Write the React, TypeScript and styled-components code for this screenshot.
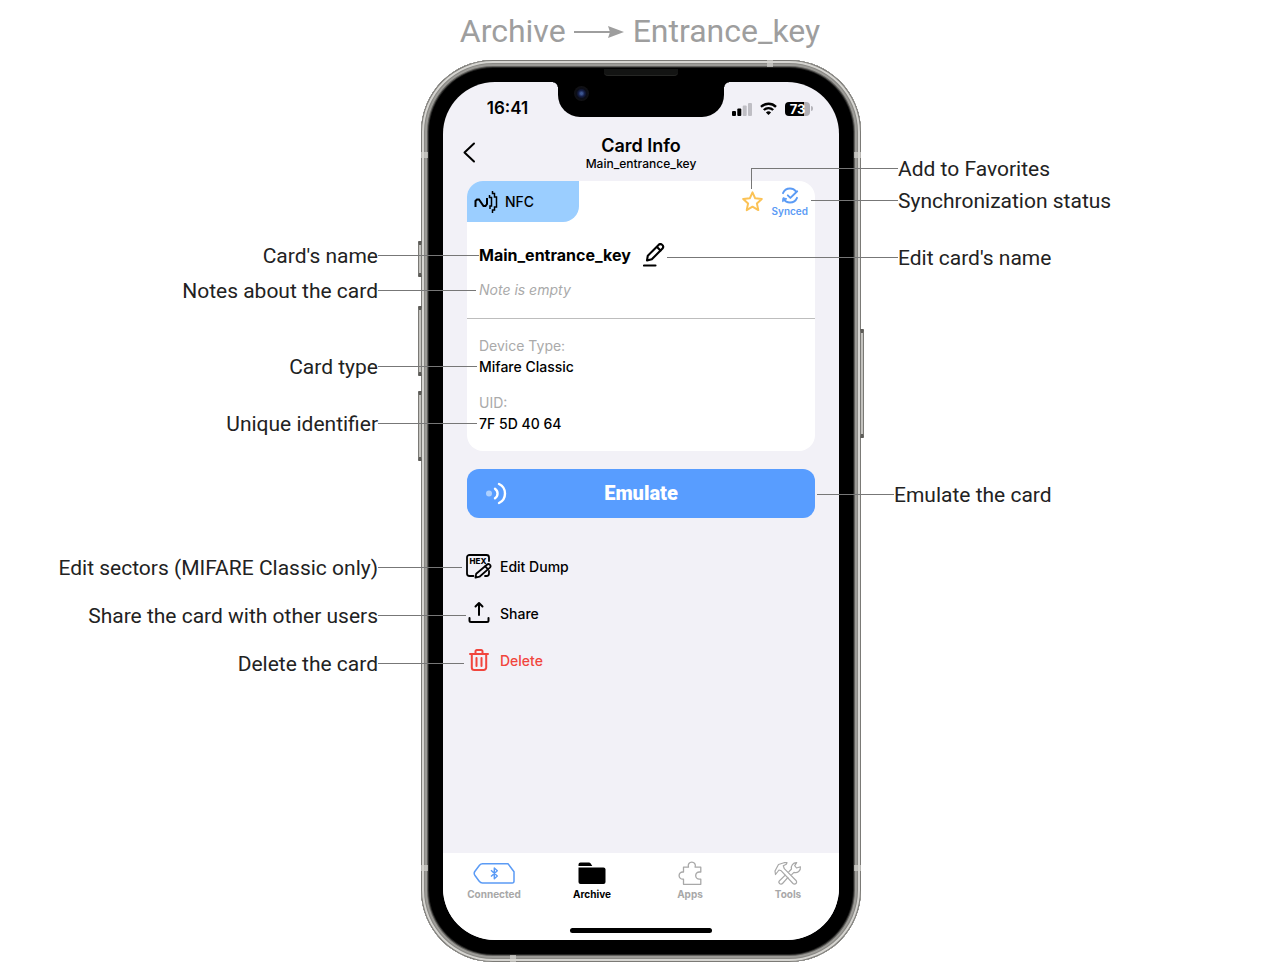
import React from 'react';
import styled, { createGlobalStyle } from 'styled-components';

const GlobalStyle = createGlobalStyle`
  * { box-sizing: border-box; }
  body { margin: 0; background: #fff; }
  button { font: inherit; color: inherit; background: none; border: 0; padding: 0; cursor: pointer; }
  h1, h2, p, ul, dl, dd { margin: 0; padding: 0; }
  ul { list-style: none; }
  a { color: inherit; text-decoration: none; }
  svg { display: block; flex: none; }
`;

const UI_FONT = "Inter, 'Liberation Sans', sans-serif";
const LABEL_FONT = "Roboto, 'Liberation Sans', sans-serif";

const Page = styled.main`
  padding: 0 0 8px 2px;
  font-family: ${LABEL_FONT};
`;

const Breadcrumb = styled.h1`
  display: flex;
  align-items: center;
  justify-content: center;
  gap: 8px;
  height: 60px;
  padding: 2px 2px 0 0;
  font-size: 32px;
  line-height: 40px;
  font-weight: 400;
  color: #9e9e9e;
`;

const Diagram = styled.div`
  display: grid;
  grid-template-columns: 1fr 440px 1fr;
`;

const Callouts = styled.ul<{ $side: 'left' | 'right' }>`
  display: flex;
  flex-direction: column;
  align-items: ${(p) => (p.$side === 'left' ? 'flex-end' : 'flex-start')};
  padding-top: ${(p) => (p.$side === 'left' ? 184 : 97)}px;
  padding-right: ${(p) => (p.$side === 'left' ? 43 : 0)}px;
  z-index: 1;
`;

const Callout = styled.li<{ $gap?: number; $indent?: number }>`
  position: relative;
  margin-top: ${(p) => p.$gap ?? 0}px;
  margin-left: ${(p) => p.$indent ?? 0}px;
  font-size: 21px;
  line-height: 24px;
  white-space: nowrap;
  color: #222;
`;

const Leader = styled.span<{ $side: 'left' | 'right'; $length: number; $drop?: number }>`
  position: absolute;
  top: 11px;
  ${(p) => (p.$side === 'left' ? 'left' : 'right')}: 100%;
  width: ${(p) => p.$length}px;
  height: ${(p) => p.$drop ?? 1}px;
  border-top: 1px solid #777;
  border-left: ${(p) => (p.$drop ? '1px solid #777' : '0')};
  pointer-events: none;
`;

const Phone = styled.section`
  position: relative;
  padding: 22px;
  border-radius: 72px;
  background: #000;
  box-shadow:
    inset 0 0 0 1px #7b7a76,
    inset 0 0 0 3px #d6d5d1,
    inset 0 0 0 4px #8a8985,
    inset 0 0 0 6px #9c9b97,
    inset 0 0 0 7px #62615e,
    inset 0 0 0 8px #222221;
`;

const SideKey = styled.span<{ $side: 'left' | 'right'; $top: number; $height: number }>`
  position: absolute;
  ${(p) => p.$side}: -3px;
  top: ${(p) => p.$top}px;
  width: 4px;
  height: ${(p) => p.$height}px;
  border: 1px solid #7a7975;
  border-top: 4px solid #5d5c58;
  border-bottom: 4px solid #5d5c58;
  border-radius: 1px;
  background: #c4c3bf;
`;

const Antenna = styled.span<{ $vertical?: boolean; $x: string; $y: string }>`
  position: absolute;
  ${(p) => p.$x};
  ${(p) => p.$y};
  width: ${(p) => (p.$vertical ? 6 : 7)}px;
  height: ${(p) => (p.$vertical ? 7 : 6)}px;
  background: #d4d3cf;
  opacity: 0.7;
`;

const Speaker = styled.span`
  position: absolute;
  top: 9px;
  left: 183px;
  right: 183px;
  height: 7px;
  border-radius: 0 0 4px 4px;
  background: #131413;
  border-bottom: 1px solid #262725;
`;

const Screen = styled.div`
  display: flex;
  flex-direction: column;
  min-height: 858px;
  overflow: hidden;
  border-radius: 52px;
  background: #f2f1f7;
  color: #000;
  font-family: ${UI_FONT};
`;

const StatusBar = styled.div`
  display: grid;
  grid-template-columns: 1fr 166px 1fr;
`;

const Clock = styled.time`
  padding: 17px 0 0 14px;
  text-align: center;
  font-size: 17px;
  line-height: 18px;
  font-weight: 600;
`;

const Notch = styled.div`
  position: relative;
  height: 35px;
  border-radius: 0 0 22px 22px;
  background: #000;
  &::before,
  &::after {
    content: '';
    position: absolute;
    top: 0;
    width: 5px;
    height: 5px;
  }
  &::before {
    right: 100%;
    background: radial-gradient(circle at 0 100%, transparent 4px, #000 5px);
  }
  &::after {
    left: 100%;
    background: radial-gradient(circle at 100% 100%, transparent 4px, #000 5px);
  }
`;

const Camera = styled.span`
  position: absolute;
  left: 16px;
  top: 4px;
  width: 15px;
  height: 15px;
  border-radius: 50%;
  background: radial-gradient(circle, #3c5590 0 1px, #16204a 3px, #0b0d18 5px, #111114 7px);
`;

const StatusIcons = styled.div`
  display: flex;
  align-items: center;
  gap: 8px;
  padding: 18px 0 0 8px;
  height: 35px;
`;

const Battery = styled.span`
  display: flex;
  align-items: center;
  gap: 1px;
  &::after {
    content: '';
    width: 2px;
    height: 5px;
    border-radius: 0 2px 2px 0;
    background: #b5b4ba;
  }
`;

const BatteryLevel = styled.span`
  width: 25px;
  border-radius: 4px;
  text-align: center;
  font-size: 13px;
  line-height: 14px;
  font-weight: 700;
  color: #fff;
  background: linear-gradient(90deg, #000 76%, #b0afb5 76%);
`;

const Header = styled.header`
  display: grid;
  grid-template-columns: 1fr auto 1fr;
  align-items: center;
  height: 64px;
  padding: 7px 20px 0;
  text-align: center;
`;

const BackButton = styled.button`
  justify-self: start;
`;

const ScreenTitle = styled.h2`
  font-size: 18px;
  line-height: 22px;
  font-weight: 600;
`;

const ScreenSubtitle = styled.p`
  font-size: 12px;
  line-height: 14px;
  font-weight: 500;
`;

const Card = styled.article`
  margin: 0 24px;
  padding-bottom: 17px;
  border-radius: 16px;
  overflow: hidden;
  background: #fff;
`;

const CardTop = styled.div`
  display: flex;
  justify-content: space-between;
  height: 41px;
`;

const TypeTab = styled.div`
  display: flex;
  align-items: center;
  gap: 7px;
  width: 112px;
  padding-left: 7px;
  border-radius: 0 0 16px 0;
  background: #9bceff;
  font-size: 14px;
  font-weight: 500;
`;

const CardTools = styled.div`
  display: flex;
  align-items: flex-start;
  gap: 9px;
  padding: 6px 7px 0 0;
`;

const FavoriteButton = styled.button`
  padding-top: 4px;
`;

const SyncStatus = styled.div`
  display: flex;
  flex-direction: column;
  align-items: center;
  gap: 1px;
  color: #5b9bf5;
  font-size: 10px;
  line-height: 12px;
  font-weight: 600;
`;

const NameRow = styled.div`
  display: flex;
  align-items: center;
  gap: 12px;
  margin: 21px 12px 0;
  font-size: 16px;
  line-height: 24px;
  font-weight: 700;
`;

const Note = styled.p`
  padding: 13px 12px 18px;
  border-bottom: 1px solid #bdbdbd;
  font-size: 14px;
  line-height: 20px;
  font-style: italic;
  color: #aaa;
`;

const Details = styled.dl`
  display: grid;
  gap: 15px;
  padding: 16px 12px 0;
  font-size: 14px;
  line-height: 21px;
  dt { color: #aaa; }
  dd { font-weight: 500; }
`;

const EmulateButton = styled.button`
  display: grid;
  grid-template-columns: 1fr auto 1fr;
  align-items: center;
  height: 49px;
  margin: 18px 24px 0;
  padding: 0 18px 2px;
  border-radius: 12px;
  background: #589dff;
  color: #fff;
  font-family: ${LABEL_FONT};
  font-size: 20px;
  font-weight: 900;
`;

const Actions = styled.ul`
  display: grid;
  gap: 19px;
  margin: 34px 23px 0;
`;

const ActionButton = styled.button<{ $danger?: boolean }>`
  display: flex;
  align-items: center;
  gap: 8px;
  height: 28px;
  font-size: 14px;
  font-weight: 500;
  color: ${(p) => (p.$danger ? '#f1453d' : '#000')};
`;

const TabBar = styled.nav`
  margin-top: auto;
  height: 87px;
  padding: 7px 2px 0;
  background: #fff;
`;

const Tabs = styled.ul`
  display: grid;
  grid-template-columns: repeat(4, 1fr);
`;

const TabLink = styled.a<{ $active?: boolean }>`
  display: flex;
  flex-direction: column;
  align-items: center;
  gap: 2px;
  font-size: 10px;
  line-height: 12px;
  font-weight: 700;
  color: ${(p) => (p.$active ? '#000' : '#a8a8a8')};
`;

const HomeIndicator = styled.div`
  width: 142px;
  height: 5px;
  margin: 28px auto 0;
  border-radius: 3px;
  background: #000;
`;

const ArrowIcon = () => (
  <svg width="51" height="14" viewBox="0 0 51 14" aria-hidden="true">
    <path d="M0 8h39" stroke="#9e9e9e" strokeWidth="2" />
    <path d="M34 2l16 6-16 6 2-6z" fill="#9e9e9e" />
  </svg>
);

const SignalIcon = () => (
  <svg width="20" height="14" viewBox="0 0 20 14" aria-hidden="true">
    <rect x="0" y="9" width="4" height="5" rx="1" />
    <rect x="5.3" y="6.5" width="4" height="7.5" rx="1" />
    <rect x="10.7" y="3.5" width="4" height="10.5" rx="1" fill="#bfbec4" />
    <rect x="16" y="1" width="4" height="13" rx="1" fill="#bfbec4" />
  </svg>
);

const WifiIcon = () => (
  <svg width="17" height="13" viewBox="0 0 17 13" fill="none" stroke="#000" strokeWidth="2.4" aria-hidden="true">
    <path d="M1 4.8a10.8 10.8 0 0 1 15 0" />
    <path d="M3.8 8a6.8 6.8 0 0 1 9.4 0" />
    <path d="M8.5 13L5.9 10.400a3.8 3.8 0 0 1 5.200 0z" fill="#000" stroke="none" />
  </svg>
);

const BackIcon = () => (
  <svg width="13" height="21" viewBox="0 0 13 21" fill="none" stroke="#000" strokeWidth="2" strokeLinecap="round" strokeLinejoin="round" aria-hidden="true">
    <path d="M11 1.5L1.5 10.5 11 19.5" />
  </svg>
);

const NfcIcon = () => (
  <svg width="24" height="24" viewBox="0 0 24 24" fill="none" stroke="#000" aria-hidden="true">
    <path d="M2.5 16H1.500V11L3 9.500h2l4.500 6.500h2l1.500-2V8" strokeWidth="2" />
    <path d="M15.500 5v2.500h2v8.500h-1.500v3" strokeWidth="1.500" />
    <path d="M18.500 1v2.500h2v3.500h2v10h-2v3h-2V23" strokeWidth="1.500" />
  </svg>
);

const StarIcon = () => (
  <svg width="21" height="21" viewBox="0 0 21 21" fill="none" stroke="#fbc255" strokeWidth="2" strokeLinejoin="round" aria-hidden="true">
    <path d="M10.500 1.300l2.700 6 6.600.7-4.900 4.400 1.400 6.700-5.800-3.400-5.800 3.400 1.400-6.700L1.200 8l6.600-.7z" />
  </svg>
);

const SyncIcon = () => (
  <svg width="18" height="17" viewBox="0 0 18 17" fill="none" stroke="#5b9bf5" strokeWidth="1.9" strokeLinecap="round" strokeLinejoin="round" aria-hidden="true">
    <path d="M2 6.200C3.300 3 6 1.500 9 1.500c2.500 0 4.500 1 5.700 2.600" />
    <path d="M16 10.800c-1.300 3.200-4 4.700-7 4.700-2.800 0-5-1.200-6.300-3.500" />
    <path d="M1.600 14.300l.4-3.600 3.500 1z" fill="#5b9bf5" strokeWidth="1" />
    <path d="M6.800 8.300l2.600 2.600 6.800-6.600" />
  </svg>
);

const PencilIcon = () => (
  <svg width="22" height="24" viewBox="0 0 22 24" fill="none" stroke="#000" strokeWidth="2.1" strokeLinecap="round" strokeLinejoin="round" aria-hidden="true">
    <path d="M4 17.500l.8-4.800L15.300 2.200a2.600 2.600 0 0 1 4.200 3.300L8.800 16.300z" />
    <path d="M14 4l3.500 3.500" />
    <path d="M1 22.500h11.500" />
  </svg>
);

const EmulateIcon = () => (
  <svg width="24" height="24" viewBox="0 0 24 24" fill="none" stroke="#fff" strokeWidth="2.400" strokeLinecap="round" aria-hidden="true">
    <circle cx="4" cy="12.500" r="3" fill="#add0ff" stroke="none" />
    <path d="M10 7.700c3.400 2.400 3.400 7.200 0 9.600" />
    <path d="M14 3c8 3.800 8 15.200 0 19" />
  </svg>
);

const HexIcon = () => (
  <svg width="26" height="26" viewBox="0 0 26 26" fill="none" stroke="#000" strokeWidth="1.800" strokeLinecap="round" strokeLinejoin="round" aria-hidden="true">
    <path d="M7.500 23H3.500A2.500 2.500 0 0 1 1 20.500v-16A2.500 2.500 0 0 1 3.500 2h17A2.500 2.500 0 0 1 23 4.500V8M23 18v2.500a2.500 2.500 0 0 1-2.500 2.500h-1.500" />
    <path d="M9.500 24.700l.7-4 10.700-8.900a2 2 0 0 1 3 2.800l-10.400 9.100z" />
    <path d="M19.200 13.300l2.900 3" />
    <text x="12" y="10.500" textAnchor="middle" fontFamily="Inter, sans-serif" fontSize="8" fontWeight="800" fill="#000" stroke="none">HEX</text>
  </svg>
);

const ShareIcon = () => (
  <svg width="26" height="24" viewBox="0 0 26 24" fill="none" stroke="#000" strokeWidth="2" strokeLinecap="round" strokeLinejoin="round" aria-hidden="true">
    <path d="M13 14V2.500M9.500 5.500L13 2l3.500 3.500" />
    <path d="M3.500 17v2.500a1.500 1.500 0 0 0 1.500 1.500h16a1.500 1.500 0 0 0 1.500-1.500v-2.500" />
  </svg>
);

const TrashIcon = () => (
  <svg width="26" height="24" viewBox="0 0 26 24" fill="none" stroke="#f1453d" strokeWidth="2" strokeLinecap="round" strokeLinejoin="round" aria-hidden="true">
    <path d="M4 6h18M9.500 5.500V3.300A1.300 1.300 0 0 1 10.800 2h4.400a1.300 1.300 0 0 1 1.300 1.300v2.200" />
    <path d="M5.800 6.500v13A2.500 2.500 0 0 0 8.300 22h9.400a2.500 2.500 0 0 0 2.500-2.500v-13" />
    <path d="M10.500 10v8M15.500 10v8" />
  </svg>
);

const ConnectedIcon = () => (
  <svg width="44" height="26" viewBox="-1 0 44 26" fill="none" stroke="#5b9bf5" strokeWidth="1.500" strokeLinejoin="round" aria-hidden="true">
    <path d="M9.500 3.700h25.500l6 8v9.500a1.700 1.700 0 0 1-1.700 1.800H9.500Q7.500 23 6 21L1.800 15.200q-1.200-1.900 0-3.700L6.500 5.200Q7.700 3.700 9.500 3.700z" />
    <path d="M18 10.300l6.300 5.700-3 2.700V8l3 2.700-6.300 5.700" strokeWidth="1.400" />
  </svg>
);

const ArchiveIcon = () => (
  <svg width="28" height="26" viewBox="0 0 28 26" aria-hidden="true">
    <path d="M.5 6V4.500A2 2 0 0 1 2.500 2.500h8.500a2 2 0 0 1 1.500.7L14.300 6z" />
    <path d="M.5 7.500h25a2 2 0 0 1 2 2V22a2 2 0 0 1-2 2h-23a2 2 0 0 1-2-2z" />
  </svg>
);

const AppsIcon = () => (
  <svg width="24" height="26" viewBox="0 0 24 26" fill="none" stroke="#a8a8a8" strokeWidth="1.300" strokeLinejoin="round" aria-hidden="true">
    <path d="M5.500 7.200h5C9.500 4 11.500 2.200 13.800 2.200s4.300 1.800 3.300 5h5.700V12h-1.500a3.600 3.600 0 0 0 0 7.200h1.500v5.100H5.500v-5.100h-.8a3.600 3.600 0 0 1 0-7.200h.8z" />
  </svg>
);

const ToolsIcon = () => (
  <svg width="28" height="26" viewBox="0 0 28 26" fill="none" stroke="#a8a8a8" strokeWidth="1.200" strokeLinejoin="round" aria-hidden="true">
    <path d="M1.500 14.500l-.5-3.500 3.500-6.500 5.500-1.800h3l-.7 1.500-3 1.500 1 3L22 20.500a2 2 0 0 1-3 3L7.300 10.800 5 10z" />
    <path d="M14.500 12.200l3-3.200c-.8-3 1.500-6.500 5.200-6.300l-2 3 1.800 2.300 3.900-1.200c.6 4-3 6.500-6.400 5.500l-2.600 2.600M14.200 17.200l-5.700 6.300a2 2 0 0 1-3-2.800l6-5.800" />
  </svg>
);

const leftCallouts = [
  { text: "Card's name", gap: 0, length: 101 },
  { text: 'Notes about the card', gap: 11, length: 98 },
  { text: 'Card type', gap: 52, length: 99 },
  { text: 'Unique identifier', gap: 33, length: 99 },
  { text: 'Edit sectors (MIFARE Classic only)', gap: 120, length: 84 },
  { text: 'Share the card with other users', gap: 24, length: 88 },
  { text: 'Delete the card', gap: 24, length: 86 },
];

const rightCallouts = [
  { text: 'Add to Favorites', gap: 0, length: 147, indent: 37, drop: 21 },
  { text: 'Synchronization status', gap: 8, length: 87, indent: 37 },
  { text: "Edit card's name", gap: 33, length: 231, indent: 37 },
  { text: 'Emulate the card', gap: 213, length: 77, indent: 33 },
];

const actions = [
  { label: 'Edit Dump', Icon: HexIcon },
  { label: 'Share', Icon: ShareIcon },
  { label: 'Delete', Icon: TrashIcon, danger: true },
];

const tabs = [
  { label: 'Connected', Icon: ConnectedIcon },
  { label: 'Archive', Icon: ArchiveIcon, active: true },
  { label: 'Apps', Icon: AppsIcon },
  { label: 'Tools', Icon: ToolsIcon },
];

export default function App() {
  return (
    <Page>
      <GlobalStyle />
      <Breadcrumb>
        <span>Archive</span>
        <ArrowIcon />
        <span>Entrance_key</span>
      </Breadcrumb>
      <Diagram>
        <Callouts $side="left">
          {leftCallouts.map((c) => (
            <Callout key={c.text} $gap={c.gap}>
              {c.text}
              <Leader $side="left" $length={c.length} />
            </Callout>
          ))}
        </Callouts>

        <Phone aria-label="Card info screen">
          <SideKey $side="left" $top={181} $height={36} />
          <SideKey $side="left" $top={246} $height={70} />
          <SideKey $side="left" $top={331} $height={70} />
          <SideKey $side="right" $top={269} $height={109} />
          <Antenna $x="left: 0" $y="top: 92px" />
          <Antenna $x="right: 0" $y="top: 92px" />
          <Antenna $x="left: 0" $y="bottom: 91px" />
          <Antenna $x="right: 0" $y="bottom: 91px" />
          <Antenna $vertical $x="right: 88px" $y="top: 0" />
          <Antenna $vertical $x="left: 89px" $y="bottom: 0" />
          <Speaker />
          <Screen>
            <StatusBar>
              <Clock>16:41</Clock>
              <Notch>
                <Camera />
              </Notch>
              <StatusIcons>
                <SignalIcon />
                <WifiIcon />
                <Battery>
                  <BatteryLevel>73</BatteryLevel>
                </Battery>
              </StatusIcons>
            </StatusBar>

            <Header>
              <BackButton type="button" aria-label="Back">
                <BackIcon />
              </BackButton>
              <div>
                <ScreenTitle>Card Info</ScreenTitle>
                <ScreenSubtitle>Main_entrance_key</ScreenSubtitle>
              </div>
            </Header>

            <Card>
              <CardTop>
                <TypeTab>
                  <NfcIcon />
                  NFC
                </TypeTab>
                <CardTools>
                  <FavoriteButton type="button" aria-label="Add to favorites">
                    <StarIcon />
                  </FavoriteButton>
                  <SyncStatus>
                    <SyncIcon />
                    Synced
                  </SyncStatus>
                </CardTools>
              </CardTop>
              <NameRow>
                Main_entrance_key
                <button type="button" aria-label="Edit name">
                  <PencilIcon />
                </button>
              </NameRow>
              <Note>Note is empty</Note>
              <Details>
                <div>
                  <dt>Device Type:</dt>
                  <dd>Mifare Classic</dd>
                </div>
                <div>
                  <dt>UID:</dt>
                  <dd>7F 5D 40 64</dd>
                </div>
              </Details>
            </Card>

            <EmulateButton type="button">
              <EmulateIcon />
              <span>Emulate</span>
            </EmulateButton>

            <Actions>
              {actions.map(({ label, Icon, danger }) => (
                <li key={label}>
                  <ActionButton type="button" $danger={danger}>
                    <Icon />
                    {label}
                  </ActionButton>
                </li>
              ))}
            </Actions>

            <TabBar>
              <Tabs>
                {tabs.map(({ label, Icon, active }) => (
                  <li key={label}>
                    <TabLink href="#" $active={active} aria-current={active ? 'page' : undefined}>
                      <Icon />
                      {label}
                    </TabLink>
                  </li>
                ))}
              </Tabs>
              <HomeIndicator />
            </TabBar>
          </Screen>
        </Phone>

        <Callouts $side="right">
          {rightCallouts.map((c) => (
            <Callout key={c.text} $gap={c.gap} $indent={c.indent}>
              {c.text}
              <Leader $side="right" $length={c.length} $drop={c.drop} />
            </Callout>
          ))}
        </Callouts>
      </Diagram>
    </Page>
  );
}
